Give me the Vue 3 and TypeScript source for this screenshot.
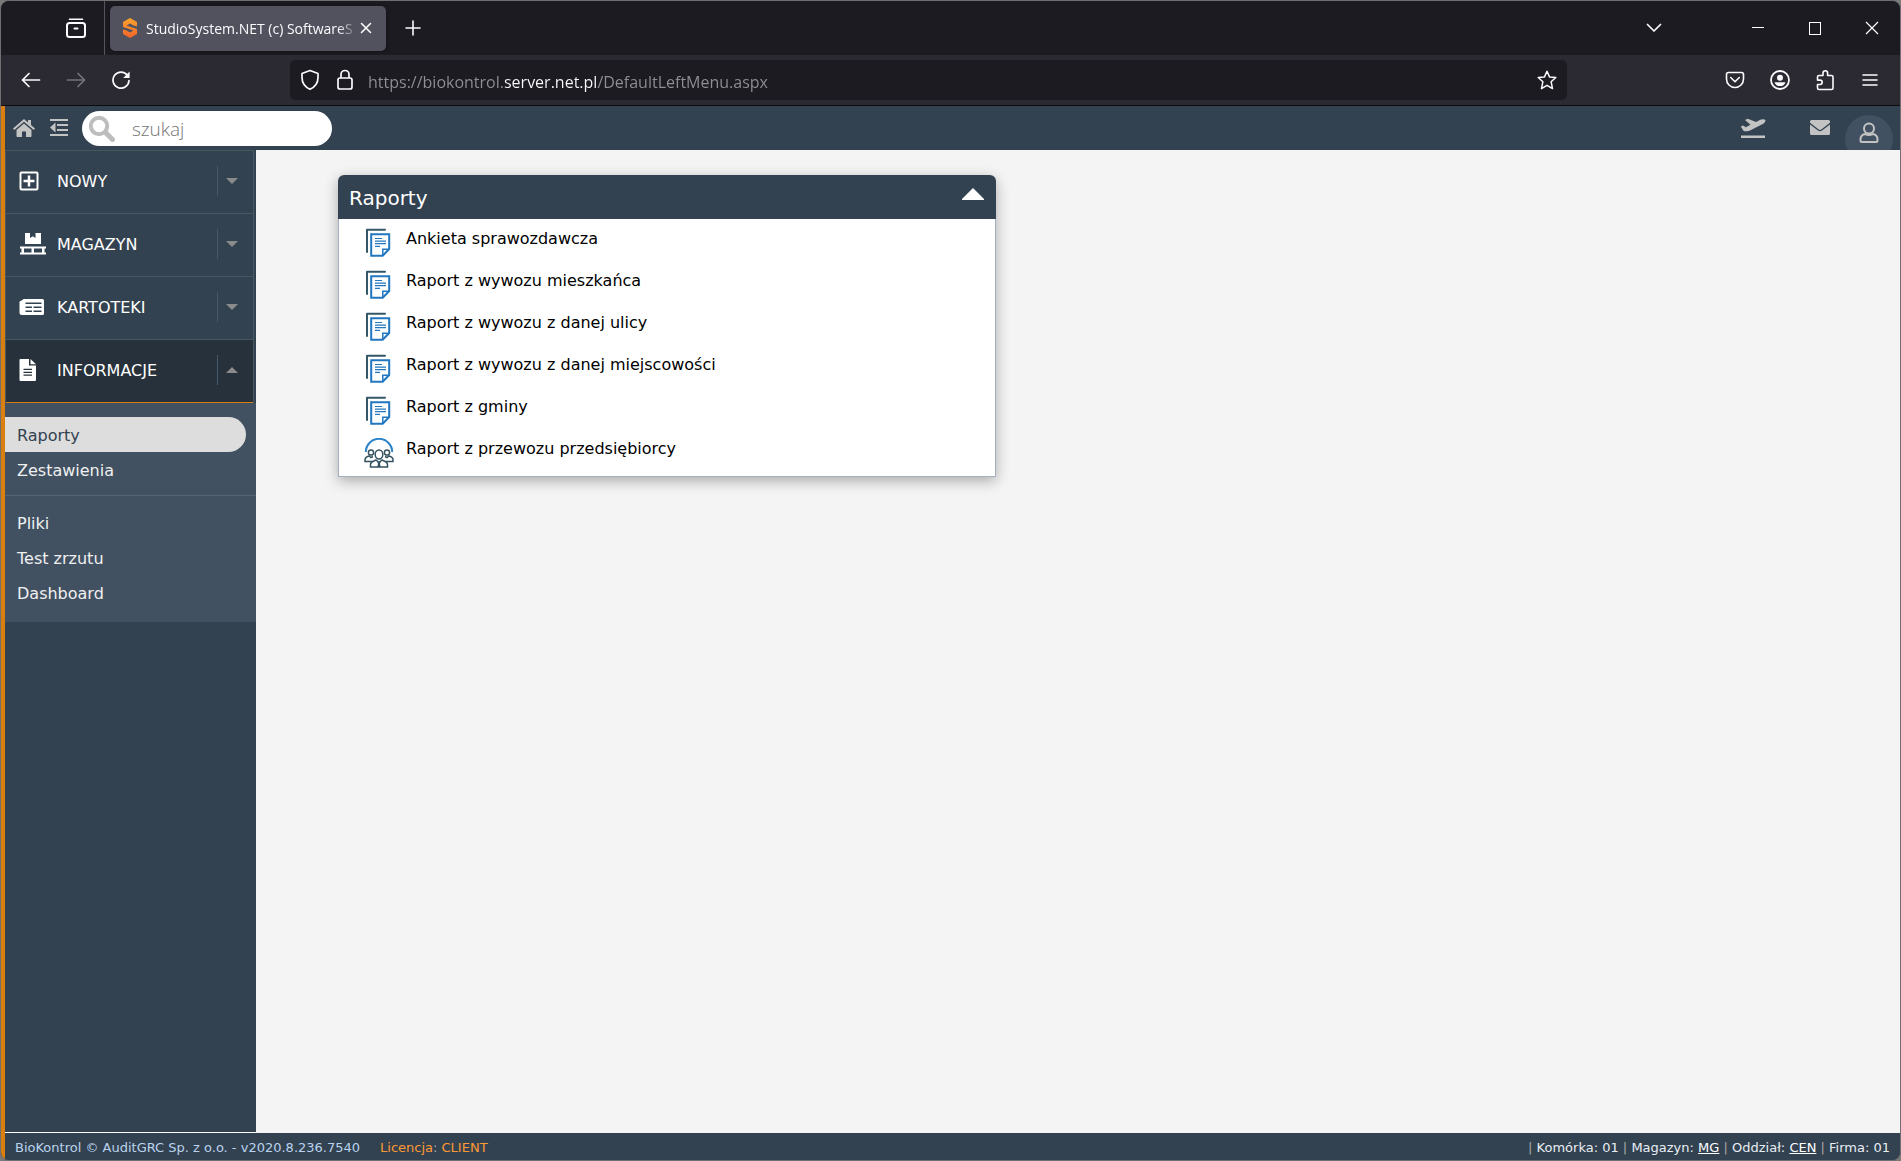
<script setup lang="ts">
import { ref } from 'vue'

interface MenuItem {
  label: string
  icon: 'plus' | 'pallet' | 'cards' | 'file'
  open: boolean
}

interface Report {
  label: string
  icon: 'doc' | 'people'
}

const address = ref('https://biokontrol.server.net.pl/DefaultLeftMenu.aspx')
const query = ref('')
const panelOpen = ref(true)

const menu: MenuItem[] = [
  { label: 'NOWY', icon: 'plus', open: false },
  { label: 'MAGAZYN', icon: 'pallet', open: false },
  { label: 'KARTOTEKI', icon: 'cards', open: false },
  { label: 'INFORMACJE', icon: 'file', open: true },
]

const submenu: { label: string; active: boolean }[][] = [
  [
    { label: 'Raporty', active: true },
    { label: 'Zestawienia', active: false },
  ],
  [
    { label: 'Pliki', active: false },
    { label: 'Test zrzutu', active: false },
    { label: 'Dashboard', active: false },
  ],
]

const reports: Report[] = [
  { label: 'Ankieta sprawozdawcza', icon: 'doc' },
  { label: 'Raport z wywozu mieszkańca', icon: 'doc' },
  { label: 'Raport z wywozu z danej ulicy', icon: 'doc' },
  { label: 'Raport z wywozu z danej miejscowości', icon: 'doc' },
  { label: 'Raport z gminy', icon: 'doc' },
  { label: 'Raport z przewozu przedsiębiorcy', icon: 'people' },
]
</script>

<template>
  <div class="window">
    <div class="tabstrip">
      <div class="view-slot">
        <button class="chrome-btn" type="button" aria-label="Firefox View">
          <svg width="22" height="22" viewBox="0 0 22 22" fill="none" stroke="#fbfbfe" stroke-width="2" stroke-linecap="round" stroke-linejoin="round">
            <path d="M4.500 2.200H17.500" stroke-width="1.600" /><rect x="2" y="6" width="18" height="14" rx="2.500" /><path d="M9.500 11.500h3" />
          </svg>
        </button>
      </div>
      <div class="tab">
        <svg width="16" height="20" viewBox="0 0 16 20">
          <defs>
            <linearGradient id="fav" x1="0" y1="0" x2="0" y2="1">
              <stop offset="0" stop-color="#fba52c" /><stop offset="1" stop-color="#f2632a" />
            </linearGradient>
          </defs>
          <path fill="url(#fav)" d="M8 0l7 4v4.500l-3.500-1L8 5.500 4.500 7.500 15 11v5l-7 4-7-4v-4.500l3.500 1L8 14.500l3.500-2L1 9V4z" />
        </svg>
        <span class="tab-title">StudioSystem.NET (c) SoftwareS</span>
        <button class="tab-close" type="button" aria-label="Close tab">
          <svg width="12" height="12" viewBox="0 0 12 12" stroke="#fbfbfe" stroke-width="1.600" stroke-linecap="round"><path d="M1.500 1.500l9 9M10.500 1.500l-9 9" /></svg>
        </button>
      </div>
      <button class="chrome-btn" type="button" aria-label="New tab">
        <svg width="16" height="16" viewBox="0 0 16 16" stroke="#fbfbfe" stroke-width="1.600" stroke-linecap="round"><path d="M8 1v14M1 8h14" /></svg>
      </button>
      <div class="window-controls">
        <button class="list-tabs" type="button" aria-label="List tabs">
          <svg width="16" height="10" viewBox="0 0 16 10" fill="none" stroke="#fbfbfe" stroke-width="1.700" stroke-linecap="round" stroke-linejoin="round"><path d="M1.500 1.500L8 8l6.500-6.500" /></svg>
        </button>
        <button class="win-btn" type="button" aria-label="Minimize">
          <svg width="14" height="14" viewBox="0 0 14 14" stroke="#fff"><path d="M1 6.500h12" /></svg>
        </button>
        <button class="win-btn" type="button" aria-label="Maximize">
          <svg width="14" height="14" viewBox="0 0 14 14" fill="none" stroke="#fff"><rect x="1.500" y="1.500" width="11" height="12" /></svg>
        </button>
        <button class="win-btn" type="button" aria-label="Close">
          <svg width="14" height="14" viewBox="0 0 14 14" stroke="#fff" stroke-width="1.200"><path d="M1 1l12 12M13 1L1 13" /></svg>
        </button>
      </div>
    </div>

    <div class="navbar">
      <button class="nav-btn" type="button" aria-label="Back">
        <svg width="20" height="16" viewBox="0 0 20 16" fill="none" stroke="#fbfbfe" stroke-width="1.700" stroke-linecap="round" stroke-linejoin="round"><path d="M18.500 8h-17M8 1.500L1.500 8 8 14.500" /></svg>
      </button>
      <button class="nav-btn" type="button" aria-label="Forward" disabled>
        <svg width="20" height="16" viewBox="0 0 20 16" fill="none" stroke="#74737c" stroke-width="1.700" stroke-linecap="round" stroke-linejoin="round"><path d="M1.500 8h17M12 1.500L18.500 8 12 14.500" /></svg>
      </button>
      <button class="nav-btn" type="button" aria-label="Reload">
        <svg width="20" height="20" viewBox="0 0 20 20" fill="none" stroke="#fbfbfe" stroke-width="1.700" stroke-linecap="round"><path d="M16.500 5.500A8 8 0 1 0 18 10.500" /><path d="M18.600 1.500v6.400h-6.400z" fill="#fbfbfe" stroke="none" /></svg>
      </button>
      <div class="urlbar">
        <svg width="20" height="22" viewBox="0 0 20 22" fill="none" stroke="#fbfbfe" stroke-width="1.700" stroke-linejoin="round"><path d="M10 1.500l8 3v4c0 6-3.500 9.700-8 11.800C5.500 18.200 2 14.500 2 8.500v-4z" /></svg>
        <svg width="18" height="22" viewBox="0 0 18 22" fill="none" stroke="#fbfbfe" stroke-width="1.700"><rect x="2" y="9" width="14" height="11" rx="2" /><path d="M5 9V5.500a4 4 0 0 1 8 0V9" /></svg>
        <input v-model="address" class="url-input" type="text" aria-label="Address" spellcheck="false" />
        <button class="chrome-btn" type="button" aria-label="Bookmark">
          <svg width="20" height="20" viewBox="0 0 20 20" fill="none" stroke="#fbfbfe" stroke-width="1.500" stroke-linejoin="round"><path d="M10 1.200l2.500 5.700 6.300.6-4.700 4.200 1.400 6.900L10 15.300l-5.500 3.300 1.400-6.900L1.200 7.500l6.300-.6z" /></svg>
        </button>
      </div>
      <div class="toolbar">
        <button class="nav-btn" type="button" aria-label="Pocket">
          <svg width="20" height="18" viewBox="0 0 20 18" fill="none" stroke="#fbfbfe" stroke-width="1.600" stroke-linecap="round" stroke-linejoin="round"><path d="M3.500 1.500h13c1.100 0 2 .9 2 2V8a8.500 8.500 0 0 1-17 0V3.500c0-1.100.9-2 2-2z" /><path d="M5.700 6.500L10 10.700l4.300-4.200" /></svg>
        </button>
        <button class="nav-btn" type="button" aria-label="Account">
          <svg width="20" height="20" viewBox="0 0 20 20" fill="none"><circle cx="10" cy="10" r="9" stroke="#fbfbfe" stroke-width="1.800" /><circle cx="10" cy="7.800" r="3" fill="#fbfbfe" /><path d="M4.500 12.200h11c-.8 2.600-3 3.900-5.500 3.900s-4.700-1.300-5.500-3.900z" fill="#fbfbfe" /></svg>
        </button>
        <button class="nav-btn" type="button" aria-label="Extensions">
          <svg width="20" height="22" viewBox="0 0 20 22" fill="none" stroke="#fbfbfe" stroke-width="1.600" stroke-linejoin="round"><path d="M4 6.500h4V4a2.300 2.300 0 0 1 4.600 0v2.500H16.500a1.500 1.500 0 0 1 1.500 1.500v11a1.500 1.500 0 0 1-1.500 1.500H4A1.500 1.500 0 0 1 2.500 19v-3.500H5a2.200 2.200 0 0 0 0-4.400H2.500V8A1.500 1.500 0 0 1 4 6.500z" /></svg>
        </button>
        <button class="nav-btn" type="button" aria-label="Menu">
          <svg width="16" height="14" viewBox="0 0 16 14" stroke="#fbfbfe" stroke-width="1.500" stroke-linecap="round"><path d="M1 2h14M1 7h14M1 12h14" /></svg>
        </button>
      </div>
    </div>

    <div class="app">
      <header class="topbar">
        <a class="icon-link" href="#" aria-label="Start">
          <svg width="24" height="20" viewBox="0 0 24 20" fill="#c3c3c3"><path d="M12 1L1 10.500l1.300 1.500L12 3.700l9.700 8.300 1.300-1.500-4-3.500V2h-3v2.500z" /><path d="M4.500 12L12 5.600l7.500 6.400v6.200a.8.800 0 0 1-.8.800H14v-5.500h-4V19H5.300a.8.800 0 0 1-.8-.8z" /></svg>
        </a>
        <button class="icon-link" type="button" aria-label="Zwiń menu">
          <svg width="20" height="20" viewBox="0 0 20 20" fill="#c3c3c3"><path d="M1 1h18v2H1zM8 6h11v2H8zM8 11h11v2H8zM1 16h18v2H1zM1 9.500l5.500-5v10z" /></svg>
        </button>
        <label class="search">
          <svg width="28" height="28" viewBox="0 0 28 28" fill="none" stroke="#bdbdbd"><circle cx="11" cy="12" r="8.200" stroke-width="4" /><path d="M17.500 18.500l7 7" stroke-width="5" stroke-linecap="round" /></svg>
          <input v-model="query" type="search" placeholder="szukaj" aria-label="Szukaj" />
        </label>
        <nav class="top-actions" aria-label="Skróty">
          <a class="icon-link" href="#" aria-label="Przyloty">
            <svg width="26" height="21" viewBox="0 0 26 21" fill="#c3c3c3"><path d="M1 17.500h24v2.500H1z" /><path d="M.8 8.500l2.300-1 2.700 1.700 4.700-2.400L5 2l2.800-1.300 8.300 3.200L20.300 1.800c1.800-.9 4.300-.9 5 .3.600 1.200-.8 3.100-2.500 4L10 12.600c-1 .5-2 .7-3 .7H4.700c-.6 0-1-.2-1.400-.7z" /></svg>
          </a>
          <a class="icon-link mail" href="#" aria-label="Wiadomości">
            <svg width="20" height="16" viewBox="0 0 20 16" fill="#c3c3c3"><path d="M1.500 0h17A1.500 1.500 0 0 1 20 1.500v1.300L11.300 9.500c-.9.600-1.700.6-2.600 0L0 2.800V1.500A1.500 1.500 0 0 1 1.500 0z" /><path d="M0 4.400l8 6.100c1.300.9 2.700.9 4 0l8-6.100v9.100a1.500 1.500 0 0 1-1.500 1.500h-17A1.500 1.500 0 0 1 0 13.500z" /></svg>
          </a>
          <a class="avatar" href="#" aria-label="Profil">
            <svg width="20" height="22" viewBox="0 0 20 22" fill="none" stroke="#c3c3c3" stroke-width="2"><circle cx="10" cy="6.500" r="5" /><path d="M6 12c-2.800.6-4.500 2.700-4.500 5.500v1c0 .8.500 1.500 1.500 1.500h14c1 0 1.500-.7 1.500-1.500v-1c0-2.800-1.700-4.900-4.500-5.500-2.500 1.200-5.500 1.200-8 0z" /></svg>
          </a>
        </nav>
      </header>

      <div class="body">
        <aside class="sidebar">
          <ul class="menu">
            <li v-for="item in menu" :key="item.label" :class="['menu-item', { open: item.open }]">
              <a href="#" class="menu-link">
                <span class="menu-icon">
                  <svg v-if="item.icon === 'plus'" width="20" height="20" viewBox="0 0 20 20" fill="none" stroke="#fff" stroke-width="2"><rect x="1.500" y="1.500" width="17" height="17" rx="1" /><path d="M10 4.500v11M4.500 10h11" stroke-width="2.500" /></svg>
                  <svg v-else-if="item.icon === 'pallet'" width="28" height="22" viewBox="0 0 28 22" fill="#fff"><path d="M6 0h5v5l2.800-1.700L16.500 5V0H22v11H6z" /><path fill-rule="evenodd" d="M1 13.500h26v2h-1.500v4H27v2H1v-2h1.500v-4H1zm4 2v4h7.500v-4zm10 0v4h8v-4z" /></svg>
                  <svg v-else-if="item.icon === 'cards'" width="26" height="18" viewBox="0 0 26 18"><path fill="#fff" fill-rule="evenodd" d="M5 1h18.500A1.500 1.500 0 0 1 25 2.500v13a1.500 1.500 0 0 1-1.500 1.500H3a2.500 2.500 0 0 1-2.500-2.500V3.500L3.500 2c.2-.6.8-1 1.500-1zm1.500 3.500v1.500h16V4.500zm0 4V10H13V8.500zm8 0V10h8V8.500zm-8 4v1.500H13v-1.500zm8 0v1.500h8v-1.500z" /></svg>
                  <svg v-else width="18" height="22" viewBox="0 0 18 22"><path fill="#fff" fill-rule="evenodd" d="M1.500 0H10v6.500h7V21a1 1 0 0 1-1 1H1.500a1 1 0 0 1-1-1V1a1 1 0 0 1 1-1zM11.500 0L17 5.200h-5.500zM4.500 9.800v1.200H13V9.800zm0 2.900v1.200H13v-1.200zm0 2.900v1.200H13v-1.200z" /></svg>
                </span>
                <span class="menu-label">{{ item.label }}</span>
                <span class="caret">
                  <svg width="12" height="6" viewBox="0 0 12 6" fill="#8b8b8b"><path v-if="item.open" d="M6 0l6 6H0z" /><path v-else d="M0 0h12L6 6z" /></svg>
                </span>
              </a>
            </li>
          </ul>
          <div class="submenu">
            <ul v-for="(group, g) in submenu" :key="g" class="submenu-group">
              <li v-for="entry in group" :key="entry.label">
                <a href="#" :class="['submenu-link', { active: entry.active }]">{{ entry.label }}</a>
              </li>
            </ul>
          </div>
        </aside>

        <main class="content">
          <section class="panel">
            <button class="panel-head" type="button" :aria-expanded="panelOpen" @click="panelOpen = !panelOpen">
              <span>Raporty</span>
              <svg width="22" height="12" viewBox="0 0 22 12"><path d="M11 0l11 11v1H0v-1z" fill="#fff" /></svg>
            </button>
            <ul v-if="panelOpen" class="report-list">
              <li v-for="report in reports" :key="report.label">
                <a href="#" class="report">
                  <svg v-if="report.icon === 'doc'" width="30" height="30" viewBox="0 0 30 30" fill="none">
                    <path d="M3 24V1.800h18" stroke="#345768" stroke-width="2" stroke-linecap="round" stroke-linejoin="round" />
                    <path d="M7.200 6.200h18V21l-6.500 6.800H7.200z" stroke="#2277c0" stroke-width="2" />
                    <path d="M25 21.300h-6.200v6.200" stroke="#2277c0" stroke-width="1.500" />
                    <path d="M11 10.500h7M11 13.200h11M11 15.700h11M11 18.300h5" stroke="#2277c0" stroke-width="1.200" />
                  </svg>
                  <svg v-else width="30" height="30" viewBox="0 0 30 30" fill="none" stroke="#345260" stroke-width="1.500">
                    <path d="M1.800 14a13.200 13.200 0 0 1 26.400 0" stroke="#2a82c9" stroke-width="2" />
                    <circle cx="7" cy="14.500" r="2.600" /><circle cx="23" cy="14.500" r="2.600" />
                    <path d="M9 23.500H1v-2c0-1.800 1.700-2.800 4-3.500l2 1.500 2-1M21 23.500h8v-2c0-1.800-1.700-2.800-4-3.500l-2 1.500-2-1" />
                    <ellipse cx="15" cy="16.500" rx="3.800" ry="4.500" fill="#fff" />
                    <path d="M6.500 29v-2.500c0-2.300 2-3 5.500-4.500l3 2.500 3-2.500c3.500 1.500 5.500 2.200 5.500 4.500V29z" fill="#fff" />
                    <path d="M13 22.500l2 1.500 2-1.500-1 3.500.8 3h-3.600l.8-3z" fill="#345260" stroke="none" />
                  </svg>
                  <span>{{ report.label }}</span>
                </a>
              </li>
            </ul>
          </section>
        </main>
      </div>

      <footer class="statusbar">
        <span class="product">BioKontrol © AuditGRC Sp. z o.o. - v2020.8.236.7540</span>
        <span class="licence">Licencja<i>:</i> CLIENT</span>
        <span class="context">
          <i>|</i> Komórka: 01 <i>|</i> Magazyn: <a href="#">MG</a> <i>|</i> Oddział: <a href="#">CEN</a> <i>|</i> Firma: 01
        </span>
      </footer>
    </div>
  </div>
</template>

<style>
body {
  background: #7a7a7a;
}
</style>

<style scoped>
* {
  box-sizing: border-box;
}

.window {
  display: flex;
  flex-direction: column;
  min-height: 100vh;
  border: 1px solid #6f6f6f;
  border-radius: 9px;
  overflow: hidden;
  background: #334250;
  font-family: "DejaVu Sans", sans-serif;
  font-size: 16px;
}

button {
  padding: 0;
  border: 0;
  background: none;
  font: inherit;
  color: inherit;
}

svg {
  display: block;
  flex: none;
}

ul {
  margin: 0;
  padding: 0;
  list-style: none;
}

a {
  color: inherit;
  text-decoration: none;
}

/* Browser tab strip */
.tabstrip {
  display: flex;
  align-items: center;
  height: 54px;
  background: #1c1b22;
}

.view-slot {
  display: flex;
  align-items: center;
  justify-content: flex-end;
  width: 104px;
  height: 54px;
  padding-right: 16px;
  border-right: 1px solid #55545c;
}

.chrome-btn {
  display: grid;
  place-items: center;
  width: 24px;
  height: 24px;
}

.tab {
  display: flex;
  align-items: center;
  width: 276px;
  height: 45px;
  margin: 0 15px 0 5px;
  padding: 0 12px;
  border-radius: 5px;
  background: #52525e;
  box-shadow: 0 0 4px rgba(0, 0, 0, 0.5);
  color: #fbfbfe;
  font-family: "Open Sans", sans-serif;
  font-size: 14px;
}

.tab-title {
  flex: 1;
  margin-left: 8px;
  white-space: nowrap;
  mask-image: linear-gradient(to left, transparent, #000 20px);
}

.tab-close {
  display: grid;
  place-items: center;
  width: 16px;
  height: 24px;
}

.window-controls {
  display: flex;
  align-items: center;
  height: 54px;
  margin-left: auto;
}

.list-tabs {
  display: grid;
  place-items: center;
  width: 40px;
  height: 40px;
  margin-right: 55px;
}

.win-btn {
  display: grid;
  place-items: center;
  width: 57px;
  height: 54px;
}

/* Browser navigation bar */
.navbar {
  display: flex;
  align-items: center;
  height: 51px;
  padding: 0 8px 0 7px;
  background: #2b2a33;
  border-bottom: 1px solid #0c0c0d;
}

.nav-btn {
  display: grid;
  place-items: center;
  width: 45px;
  height: 40px;
}

.urlbar {
  display: flex;
  align-items: center;
  flex: 1;
  height: 40px;
  margin: 0 145px 0 147px;
  padding: 0 8px 0 10px;
  gap: 16px;
  border-radius: 5px;
  background: #1c1b22;
}

.url-input {
  flex: 1;
  min-width: 0;
  height: 40px;
  margin-left: -2px;
  padding: 4px 0 0;
  border: 0;
  outline: 0;
  background: linear-gradient(to right, #8f8f96 137px, #fbfbfe 137px, #fbfbfe 230px, #8f8f96 230px);
  background-clip: text;
  color: transparent;
  font-family: "Open Sans", sans-serif;
  font-size: 16px;
}

.toolbar {
  display: flex;
}

/* Application */
.app {
  display: flex;
  flex-direction: column;
  flex: 1;
  border-left: 4px solid #d97f10;
}

.topbar {
  display: flex;
  align-items: center;
  height: 44px;
  padding: 0 7px;
  background: #334250;
}

.icon-link {
  display: block;
  margin-right: 13px;
}

.search {
  display: flex;
  align-items: center;
  width: 250px;
  height: 35px;
  padding-left: 6px;
  border-radius: 18px;
  background: #fff;
}

.search input {
  width: 180px;
  margin-left: 16px;
  padding: 2px 0 0;
  border: 0;
  outline: 0;
  background: none;
  font-family: "Open Sans", sans-serif;
  font-size: 19px;
  font-weight: 300;
}

.search input::placeholder {
  color: #757575;
}

.top-actions {
  display: flex;
  align-items: center;
  height: 44px;
  margin-left: auto;
  overflow: hidden;
}

.top-actions .icon-link {
  margin-right: 44px;
}

.top-actions .mail {
  margin-right: 15px;
}

.avatar {
  display: grid;
  place-items: start center;
  align-self: flex-start;
  width: 48px;
  height: 48px;
  margin-top: 9px;
  padding-top: 7px;
  border-radius: 24px;
  background: #415162;
}

.body {
  display: flex;
  flex: 1;
}

.sidebar {
  width: 251px;
  border-bottom: 1px solid #fff;
  background: #334250;
  color: #fff;
}

.menu {
  margin-right: 2px;
  border: 1px solid #47585f;
  border-width: 1px 1px 0;
}

.menu-item {
  border-bottom: 1px solid #47585f;
}

.menu-item.open {
  border-bottom-color: #d97f10;
  background: #27313b;
}

.menu-link {
  display: flex;
  align-items: center;
  height: 62px;
  padding: 0 0 2px 13px;
}

.menu-icon {
  width: 38px;
}

.menu-label {
  flex: 1;
}

.caret {
  display: grid;
  place-items: center;
  width: 36px;
  height: 30px;
  padding-right: 7px;
  border-left: 1px solid #46576a;
}

.submenu {
  padding-bottom: 2px;
  background: #415162;
}

.submenu-group {
  padding: 14px 0 8px;
}

.submenu-group + .submenu-group {
  padding: 9px 0 10px;
  border-top: 1px solid #5a6470;
}

.submenu-link {
  display: block;
  margin-right: 10px;
  padding: 2px 0 0 12px;
  border-radius: 0 18px 18px 0;
  line-height: 33px;
  color: #f0f0f0;
}

.submenu-link.active {
  background: #dddddd;
  color: #334250;
}

.content {
  flex: 1;
  padding: 25px 24px 25px 82px;
  background: #f4f4f4;
}

.panel {
  width: 658px;
  max-width: 100%;
  border-radius: 6px 6px 0 0;
  box-shadow: 0 4px 14px rgba(0, 0, 0, 0.3);
}

.panel-head {
  display: flex;
  align-items: center;
  justify-content: space-between;
  width: 100%;
  height: 44px;
  padding: 2px 12px 0 11px;
  border-radius: 6px 6px 0 0;
  background: #334250;
  color: #fff;
  font-size: 20px;
}

.panel-head svg {
  margin-bottom: 8px;
}

.report-list {
  padding-bottom: 5px;
  border: 1px solid #a3b0bf;
  border-top: 0;
  background: #fff;
}

.report {
  display: flex;
  height: 42px;
  padding: 9px 0 0 25px;
  gap: 12px;
  line-height: 22px;
  color: #000;
}

.statusbar {
  display: flex;
  align-items: center;
  height: 27px;
  padding: 2px 10px 0;
  background: #334250;
  color: #b9d3ee;
  font-size: 13px;
}

.statusbar i {
  font-style: normal;
  color: #a9a9a9;
}

.licence {
  margin-left: 20px;
  color: #ff9933;
}

.context {
  margin-left: auto;
  color: #e8eef4;
}

.context a {
  color: #fff;
  text-decoration: underline;
}
</style>
